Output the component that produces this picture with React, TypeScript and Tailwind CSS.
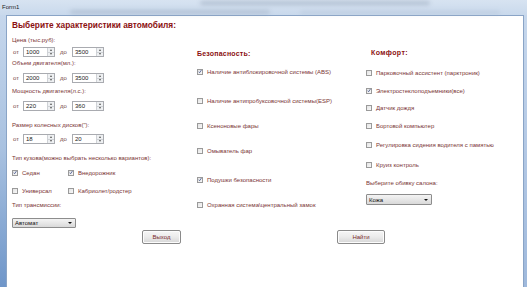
import React from "react";

const font = { fontFamily: '"Liberation Sans", Arial, sans-serif' };

function Spin({ value }: { value: string }) {
  return (
    <div className="flex h-[10px] w-[32px] border border-[#a9abb0] bg-white">
      <div className="flex flex-1 items-center pl-[2px] text-[6px] leading-none text-[#222]">{value}</div>
      <div className="flex w-[7px] flex-col border-l border-[#cfd2d6] bg-[#eef0f2]">
        <div className="flex flex-1 items-center justify-center border-b border-[#cfd2d6]">
          <div className="h-0 w-0 border-x-[1.5px] border-b-[2px] border-x-transparent border-b-[#555]" />
        </div>
        <div className="flex flex-1 items-center justify-center">
          <div className="h-0 w-0 border-x-[1.5px] border-t-[2px] border-x-transparent border-t-[#555]" />
        </div>
      </div>
    </div>
  );
}

function RangeRow({ a, b }: { a: string; b: string }) {
  return (
    <div className="flex h-[10px] items-center">
      <span className="w-[11px] pl-[1px] text-[6px] leading-none text-[#7a4a4a]">от</span>
      <Spin value={a} />
      <span className="w-[17px] pl-[5px] text-[6px] leading-none text-[#7a4a4a]">до</span>
      <Spin value={b} />
    </div>
  );
}

function Box({ checked }: { checked?: boolean }) {
  return (
    <div className="flex h-[6px] w-[6px] shrink-0 items-center justify-center border border-[#9a9a9a] bg-gradient-to-br from-[#e4e4e4] to-[#f8f8f8]">
      {checked && (
        <svg width="5" height="5" viewBox="0 0 10 10">
          <path d="M1.5 5.5 L4 8 L8.5 1.5" stroke="#3b4f8a" strokeWidth="2" fill="none" />
        </svg>
      )}
    </div>
  );
}

function Check({ label, checked, cls }: { label: string; checked?: boolean; cls?: string }) {
  return (
    <div className={"flex h-[9px] items-center " + (cls || "")}>
      <Box checked={checked} />
      <span className="ml-[4px] whitespace-nowrap text-[6px] leading-none text-[#7a3434]">{label}</span>
    </div>
  );
}

function Label({ text, cls }: { text: string; cls?: string }) {
  return (
    <div className={"flex h-[9px] items-center whitespace-nowrap text-[6px] leading-none text-[#7a3434] " + (cls || "")}>
      {text}
    </div>
  );
}

function Combo({ text, w, h }: { text: string; w: string; h: string }) {
  return (
    <div className={"flex items-center justify-between rounded-[1px] border border-[#8d8d8d] bg-gradient-to-b from-[#f4f4f4] to-[#d9d9d9] pl-[2px] pr-[3px] " + w + " " + h}>
      <span className="text-[6px] leading-none text-[#111]">{text}</span>
      <div className="h-0 w-0 border-x-[2px] border-t-[2.5px] border-x-transparent border-t-[#111]" />
    </div>
  );
}

function Btn({ text, w }: { text: string; w: string }) {
  return (
    <div className={"flex h-[14px] items-center justify-center rounded-[2px] border border-[#8a8a8a] bg-gradient-to-b from-[#f6f6f6] via-[#ebebeb] to-[#d6d6d6] text-[6px] leading-none text-[#7a2a2a] shadow-[inset_0_0_0_1px_#fcfcfc] " + w}>
      {text}
    </div>
  );
}

export default function App() {
  return (
    <div style={font} className="relative h-[287px] w-[527px] overflow-hidden bg-[#c4d5ea]">
      {/* title bar */}
      <div className="relative h-[15px] bg-gradient-to-b from-[#d7e3f1] to-[#c9d9ec]">
        <div className="absolute left-[200px] top-[1px] h-[4px] w-[230px] rounded-full bg-[#7f8ea3] opacity-40 blur-[2px]" />
        <div className="absolute left-[70px] top-[10px] h-[4px] w-[200px] rounded-full bg-[#8e9db2] opacity-40 blur-[2px]" />
        <div className="absolute left-[300px] top-[11px] h-[3px] w-[200px] rounded-full bg-[#a6b6cb] opacity-40 blur-[2px]" />
        <span className="absolute left-[2px] top-[4px] text-[6px] leading-none text-[#222]">Form1</span>
      </div>
      <div className="flex h-[272px]">
        <div className="w-[6px] bg-gradient-to-b from-[#c6d7ec] via-[#a8c1e0] to-[#6f96c9]" />
        <div className="flex flex-1 flex-col border-l border-t border-[#8aa4c6] bg-white">
          <div className="flex">
            {/* left column */}
            <div className="flex w-[190px] flex-col pl-[5px]">
              <div className="mt-[4px] flex h-[11px] items-center whitespace-nowrap text-[8.3px] font-bold leading-none text-[#8b1010]">
                Выберите характеристики автомобиля:
              </div>
              <Label text="Цена (тыс.руб):" cls="mt-[4px]" />
              <div className="mt-[3px]"><RangeRow a="1000" b="3500" /></div>
              <Label text="Объем двигателя(мл.):" cls="mt-[1px]" />
              <div className="mt-[6px]"><RangeRow a="2000" b="3500" /></div>
              <Label text="Мощность двигателя(л.с.):" cls="mt-[3px]" />
              <div className="mt-[6px]"><RangeRow a="220" b="360" /></div>
              <Label text='Размер колесных дисков("):' cls="mt-[9px]" />
              <div className="mt-[5px]"><RangeRow a="18" b="20" /></div>
              <Label text="Тип кузова(можно выбрать несколько вариантов):" cls="mt-[9px]" />
              <div className="mt-[6px] flex">
                <div className="w-[56px]"><Check label="Седан" checked /></div>
                <Check label="Внедорожник" checked />
              </div>
              <div className="mt-[9px] flex">
                <div className="w-[56px]"><Check label="Универсал" /></div>
                <Check label="Кабриолет/родстер" />
              </div>
              <Label text="Тип трансмиссии:" cls="mt-[5px]" />
              <div className="mt-[9px]"><Combo text="Автомат" w="w-[64px]" h="h-[10px]" /></div>
            </div>
            {/* middle column */}
            <div className="flex w-[169px] flex-col">
              <div className="mt-[33px] flex h-[9px] items-center text-[7px] font-bold leading-none tracking-[0.2px] text-[#8b1010]">Безопасность:</div>
              <Check label="Наличие антиблокировочной системы (ABS)" checked cls="mt-[9px]" />
              <Check label="Наличие антипробуксовочной системы(ESP)" cls="mt-[20px]" />
              <Check label="Ксеноновые фары" cls="mt-[16px]" />
              <Check label="Омыватель фар" cls="mt-[16px]" />
              <Check label="Подушки безопасности" checked cls="mt-[20px]" />
              <Check label="Охранная система\центральный замок" cls="mt-[16px]" />
            </div>
            {/* right column */}
            <div className="flex flex-1 flex-col">
              <div className="mt-[32px] flex h-[9px] items-center pl-[5px] text-[7px] font-bold leading-none tracking-[0.4px] text-[#8b1010]">Комфорт:</div>
              <Check label="Парковочный ассистент (парктроник)" cls="mt-[11px]" />
              <Check label="Электростеклоподъемники(все)" checked cls="mt-[9px]" />
              <Check label="Датчик дождя" cls="mt-[8px]" />
              <Check label="Бортовой компьютер" cls="mt-[9px]" />
              <Check label="Регулировка сидения водителя с памятью" cls="mt-[10px]" />
              <Check label="Круиз контроль" cls="mt-[11px]" />
              <Label text="Выберите обивку салона:" cls="mt-[9px]" />
              <div className="mt-[7px]"><Combo text="Кожа" w="w-[66px]" h="h-[11px]" /></div>
            </div>
          </div>
          <div className="mt-[2px] flex">
            <div className="ml-[135px]"><Btn text="Выход" w="w-[39px]" /></div>
            <div className="ml-[156px]"><Btn text="Найти" w="w-[48px]" /></div>
          </div>
        </div>
        <div className="w-[4px] border-l border-[#8aa4c6] bg-gradient-to-b from-[#c6d7ec] via-[#b3c8e4] to-[#9fb9dc]" />
      </div>
    </div>
  );
}
